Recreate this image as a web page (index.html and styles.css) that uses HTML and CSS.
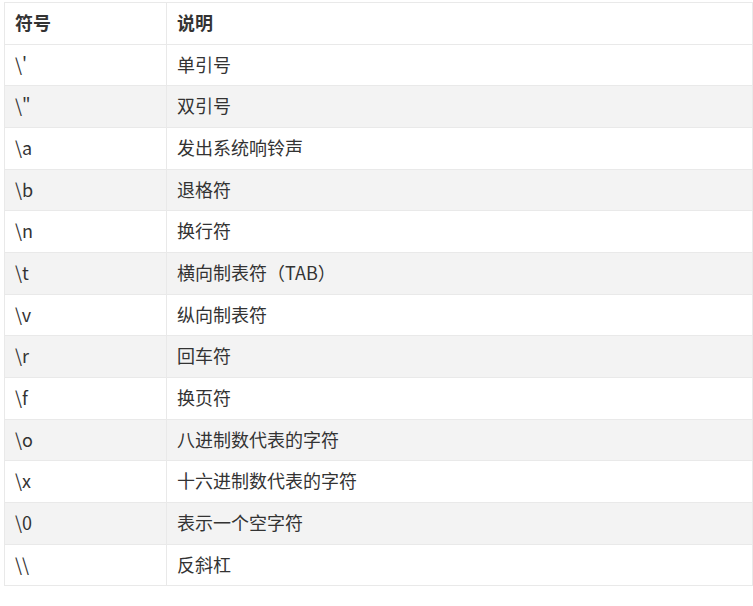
FILE: index.html
```html
<!DOCTYPE html>
<html lang="zh-CN">
<head>
<meta charset="utf-8">
<title>转义字符</title>
<link rel="stylesheet" href="styles.css">
</head>
<body>
<table class="esc-table">
  <thead>
    <tr><th class="col-sym">符号</th><th>说明</th></tr>
  </thead>
  <tbody>
    <tr><td>\'</td><td>单引号</td></tr>
    <tr><td>\"</td><td>双引号</td></tr>
    <tr><td>\a</td><td>发出系统响铃声</td></tr>
    <tr><td>\b</td><td>退格符</td></tr>
    <tr><td>\n</td><td>换行符</td></tr>
    <tr><td>\t</td><td>横向制表符（TAB）</td></tr>
    <tr><td>\v</td><td>纵向制表符</td></tr>
    <tr><td>\r</td><td>回车符</td></tr>
    <tr><td>\f</td><td>换页符</td></tr>
    <tr><td>\o</td><td>八进制数代表的字符</td></tr>
    <tr><td>\x</td><td>十六进制数代表的字符</td></tr>
    <tr><td>\0</td><td>表示一个空字符</td></tr>
    <tr><td>\\</td><td>反斜杠</td></tr>
  </tbody>
</table>
</body>
</html>
```
FILE: styles.css
```css
html, body {
  margin: 0;
  padding: 0;
  background: #fff;
}
body {
  font-family: "Noto Sans CJK SC", "Noto Sans", sans-serif;
  color: #333;
}
.esc-table {
  margin: 2px 0 0 4px;
  width: 749px;
  border-collapse: collapse;
  font-size: 18px;
}
.esc-table th,
.esc-table td {
  border: 1px solid #e9e9e9;
  padding: 9px 10px 11px 10px;
  height: 20.65px;
  line-height: 20.65px;
  text-align: left;
  vertical-align: middle;
}
.esc-table th {
  font-weight: bold;
  color: #333;
}
.esc-table .col-sym {
  width: 141px;
}
.esc-table tbody tr:nth-child(even) td {
  background: #f3f3f3;
}
```
